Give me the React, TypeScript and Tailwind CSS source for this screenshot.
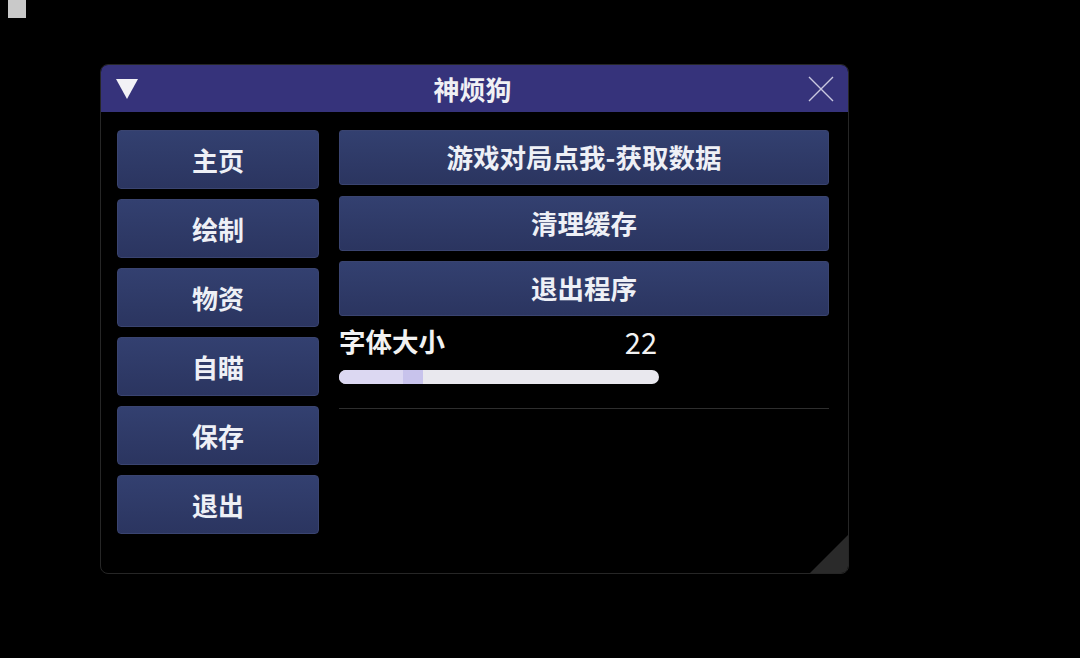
import { useState } from "react";

const menu = ["主页", "绘制", "物资", "自瞄", "保存", "退出"];
const actions = ["游戏对局点我-获取数据", "清理缓存", "退出程序"];

export default function App() {
  const [fontSize] = useState(22);
  // slider range 10..60
  const pct = ((fontSize - 10) / 50) * 100;

  return (
    <div
      className="w-[1080px] h-[658px] bg-black overflow-hidden"
      style={{ fontFamily: '"Noto Sans CJK SC", "Noto Sans", sans-serif' }}
    >
      <div className="ml-[8px] w-[18px] h-[18px] bg-[#c9c9c9]" />

      {/* main window */}
      <div className="ml-[100px] mt-[46px] w-[749px] h-[510px] flex flex-col rounded-[8px] border border-[#262626] overflow-hidden relative">
        <div className="h-[47px] bg-[#36337b] flex items-center px-[14px] relative">
          <svg width="24" height="22" viewBox="0 0 24 22" className="shrink-0">
            <polygon points="1,1 23,1 12,21" fill="#f2f2f6" />
          </svg>
          <div className="flex-1 text-center text-[26px] font-bold text-[#f0f0f4] pr-[2px] leading-none">神烦狗</div>
          <svg width="26" height="26" viewBox="0 0 26 26" className="shrink-0">
            <path d="M1 1 L25 25 M25 1 L1 25" stroke="#c9c8e0" strokeWidth="1.4" />
          </svg>
        </div>

        <div className="flex-1 flex pl-[16px] pr-[19px] pt-[18px] gap-[20px]">
          <div className="w-[202px] flex flex-col gap-[10px]">
            {menu.map((m) => (
              <button
                key={m}
                className="h-[59px] rounded-[4px] bg-gradient-to-b from-[#334070] to-[#2b3560] border border-[#3a4470] text-[26px] font-bold text-[#eef0f6] leading-none"
              >
                {m}
              </button>
            ))}
          </div>

          <div className="flex-1 flex flex-col">
            <div className="flex flex-col gap-[10.5px]">
              {actions.map((a) => (
                <button
                  key={a}
                  className="h-[55px] rounded-[3px] bg-gradient-to-b from-[#334070] to-[#2b3560] border border-[#3a4470] text-[26.5px] font-bold text-[#eef0f6] leading-none"
                >
                  {a}
                </button>
              ))}
            </div>

            <div className="w-[320px] mt-[9px] flex items-center justify-between text-[#f2f2f2] leading-[32px]">
              <span className="text-[26.5px] font-bold">字体大小</span>
              <span className="text-[29px] pr-[2px]">{fontSize}</span>
            </div>
            <div className="relative mt-[13px] w-[320px] h-[14px] rounded-full bg-[#e9e8ee] overflow-hidden">
              <div className="absolute inset-y-0 left-0 bg-[#dcd8f2]" style={{ width: `${pct}%` }} />
              <div
                className="absolute inset-y-0 w-[20px] bg-[#c8c3ec]"
                style={{ left: `calc(${pct}% - 13px)` }}
              />
            </div>
            <div className="mt-[24px] h-px bg-[#2e2e2e]" />
          </div>
        </div>

        {/* resize grip */}
        <svg width="38" height="38" viewBox="0 0 38 38" className="absolute right-0 bottom-0">
          <polygon points="38,0 38,38 0,38" fill="#2a2a2a" />
        </svg>
      </div>
    </div>
  );
}
